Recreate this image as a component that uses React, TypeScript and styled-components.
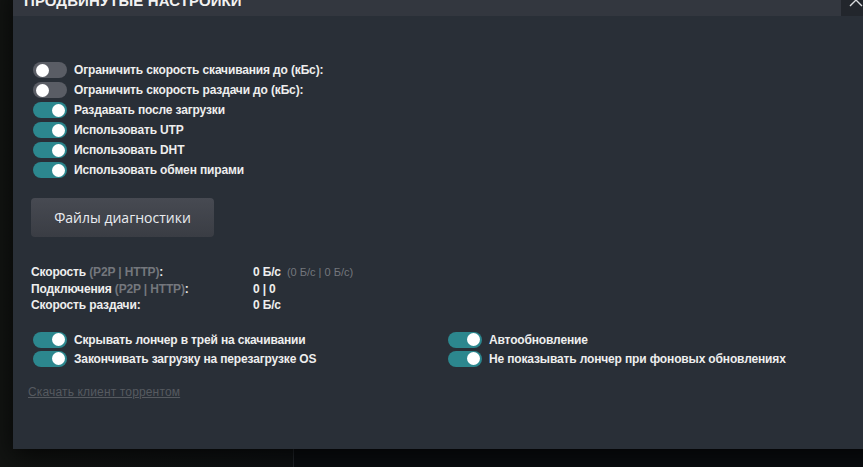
import React, { useState } from 'react';
import styled, { createGlobalStyle } from 'styled-components';

const GlobalStyle = createGlobalStyle`
  html, body {
    margin: 0;
    padding: 0;
    width: 100%;
    height: 100%;
    overflow: hidden;
  }
  body {
    background: #0b0e11;
    font-family: "Liberation Sans", Arial, sans-serif;
  }
  #root {
    height: 100%;
  }
`;

const Page = styled.div`
  position: relative;
  display: flex;
  width: 100%;
  height: 100%;
  background: linear-gradient(180deg, #141614 0%, #1d1e1b 45%, #161816 70%, #0b0e11 100%);
`;

const Sidebar = styled.aside`
  width: 293px;
  flex-shrink: 0;
  border-right: 1px solid #22262b;
  background: linear-gradient(90deg, #121412 0%, #0e1113 100%);
`;

const Main = styled.main`
  flex: 1;
  background: #0a0d10;
`;

const Overlay = styled.div`
  position: absolute;
  inset: 0;
`;

const Modal = styled.section`
  position: absolute;
  left: 13px;
  top: -16px;
  right: -24px;
  height: 465px;
  display: flex;
  flex-direction: column;
  background: #292f37;
  box-shadow: 0 6px 24px rgba(0, 0, 0, 0.75);
`;

const Header = styled.header`
  height: 32px;
  display: flex;
  align-items: center;
  justify-content: space-between;
  background: #33373f;
  flex-shrink: 0;
`;

const Title = styled.h2`
  margin: 0;
  padding: 0 0 0 11px;
  font-size: 15px;
  font-weight: 700;
  color: #f2f2f2;
  text-transform: uppercase;
  letter-spacing: 0.1px;
`;

const CloseButton = styled.button`
  width: 46px;
  height: 32px;
  border: 0;
  padding: 0 16px 0 0;
  background: #22262c;
  display: flex;
  align-items: center;
  justify-content: center;
  cursor: pointer;
`;

const Body = styled.div`
  flex: 1;
  display: flex;
  flex-direction: column;
  padding: 46px 18px 0;
`;

const ToggleList = styled.div<{ $gap?: number }>`
  display: flex;
  flex-direction: column;
  gap: ${(p) => p.$gap ?? 4}px;
`;

const ToggleRow = styled.label`
  display: flex;
  align-items: center;
  gap: 7px;
  height: 16px;
  padding-left: 2px;
  font-size: 12px;
  font-weight: 700;
  letter-spacing: -0.15px;
  color: #eeeeee;
  cursor: pointer;
  white-space: nowrap;
`;

const Track = styled.span<{ $on: boolean }>`
  position: relative;
  width: 34px;
  height: 16px;
  border-radius: 8px;
  flex-shrink: 0;
  background: ${(p) => (p.$on ? '#2c878e' : '#5a5d65')};
`;

const Knob = styled.span<{ $on: boolean }>`
  position: absolute;
  top: 1.5px;
  left: ${(p) => (p.$on ? '18.5px' : '2.5px')};
  width: 13px;
  height: 13px;
  border-radius: 50%;
  background: #ffffff;
`;

const DiagButton = styled.button`
  align-self: flex-start;
  margin-top: 20px;
  width: 183px;
  height: 39px;
  border: 0;
  border-radius: 4px;
  background: linear-gradient(180deg, #474a52 0%, #3a3d44 100%);
  color: #e9ecf0;
  font-family: "Open Sans", "Liberation Sans", sans-serif;
  font-size: 14px;
  cursor: pointer;
`;

const Stats = styled.div`
  margin-top: 27px;
  display: grid;
  grid-template-columns: 222px auto;
  justify-content: start;
  font-size: 12px;
  font-weight: 700;
  letter-spacing: -0.15px;
  line-height: 16.5px;
  color: #eeeeee;
`;

const Muted = styled.span`
  color: #74777d;
`;

const Extra = styled.span`
  margin-left: 6px;
  font-size: 11px;
  font-weight: 400;
  letter-spacing: 0;
  color: #74777d;
`;

const BottomGrid = styled.div`
  margin-top: 18px;
  display: grid;
  grid-template-columns: 415px auto;
  justify-content: start;
`;

const TorrentLink = styled.a`
  align-self: flex-start;
  margin: 18px 0 0 -3px;
  font-size: 12px;
  letter-spacing: 0.15px;
  color: #565a60;
  text-decoration: underline;
  cursor: pointer;
`;

type ToggleProps = { label: string; initial: boolean };

const Toggle: React.FC<ToggleProps> = ({ label, initial }) => {
  const [on, setOn] = useState(initial);
  return (
    <ToggleRow onClick={() => setOn(!on)}>
      <Track $on={on}>
        <Knob $on={on} />
      </Track>
      {label}
    </ToggleRow>
  );
};

const mainToggles: ToggleProps[] = [
  { label: 'Ограничить скорость скачивания до (кБс):', initial: false },
  { label: 'Ограничить скорость раздачи до (кБс):', initial: false },
  { label: 'Раздавать после загрузки', initial: true },
  { label: 'Использовать UTP', initial: true },
  { label: 'Использовать DHT', initial: true },
  { label: 'Использовать обмен пирами', initial: true },
];

const App: React.FC = () => {
  return (
    <>
      <GlobalStyle />
      <Page>
        <Sidebar />
        <Main />
        <Overlay>
          <Modal>
            <Header>
              <Title>Продвинутые настройки</Title>
              <CloseButton aria-label="Закрыть">
                <svg width="14" height="14" viewBox="0 0 14 14">
                  <path d="M1 1 L13 13 M13 1 L1 13" stroke="#d8dadd" strokeWidth="1.4" />
                </svg>
              </CloseButton>
            </Header>
            <Body>
              <ToggleList>
                {mainToggles.map((t) => (
                  <Toggle key={t.label} {...t} />
                ))}
              </ToggleList>

              <DiagButton>Файлы диагностики</DiagButton>

              <Stats>
                <span>
                  Скорость <Muted>(P2P | HTTP)</Muted>:
                </span>
                <span>
                  0 Б/с<Extra>(0 Б/с | 0 Б/с)</Extra>
                </span>
                <span>
                  Подключения <Muted>(P2P | HTTP)</Muted>:
                </span>
                <span>0 | 0</span>
                <span>Скорость раздачи:</span>
                <span>0 Б/с</span>
              </Stats>

              <BottomGrid>
                <ToggleList $gap={3}>
                  <Toggle label="Скрывать лончер в трей на скачивании" initial />
                  <Toggle label="Закончивать загрузку на перезагрузке OS" initial />
                </ToggleList>
                <ToggleList $gap={3}>
                  <Toggle label="Автообновление" initial />
                  <Toggle label="Не показывать лончер при фоновых обновлениях" initial />
                </ToggleList>
              </BottomGrid>

              <TorrentLink>Скачать клиент торрентом</TorrentLink>
            </Body>
          </Modal>
        </Overlay>
      </Page>
    </>
  );
};

export default App;
